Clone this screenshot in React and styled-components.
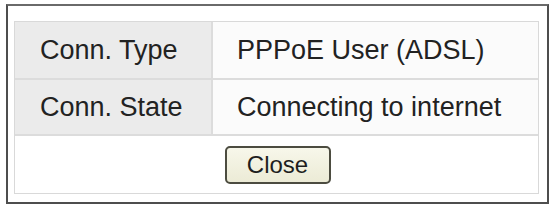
import React from "react";
import styled, { createGlobalStyle } from "styled-components";

const GlobalStyle = createGlobalStyle`
  body {
    margin: 0;
    background: #ffffff;
    font-family: "Liberation Sans", Arial, sans-serif;
  }
`

const Panel = styled.div`
  box-sizing: border-box;
  width: 543px;
  height: 200px;
  margin: 4px 0 0 6px;
  padding: 15px 8px 8px 6px;
  border: 2px solid #4e4e4e;
  border-top-color: #6a6a6a;
  background: #ffffff;
`

const InfoTable = styled.div`
  display: grid;
  grid-template-columns: 198px 1fr;
  grid-template-rows: 58px 56px 1fr;
  height: 100%;
  box-sizing: border-box;
  border: 1px solid #d9d9d9;
`

const Cell = styled.div`
  display: flex;
  align-items: center;
  padding-left: ${p => (p.$label ? "25px" : "24px")};
  font-size: 27px;
  color: #222;
  background: ${p => (p.$label ? "#ebebeb" : "#fbfbfb")};
  border-bottom: 2px solid #dcdcdc;
  border-right: ${p => (p.$label ? "2px solid #dcdcdc" : "none")};
  white-space: nowrap;
`

const Footer = styled.div`
  grid-column: 1 / span 2;
  display: flex;
  align-items: center;
  justify-content: center;
  padding-left: 2px;
  background: #ffffff;
`

const CloseButton = styled.button`
  box-sizing: border-box;
  width: 106px;
  height: 38px;
  border: 2px solid #4c4c40;
  border-radius: 5px;
  background: linear-gradient(#f7f7ea, #ecebd6);
  font-family: "Liberation Sans", Arial, sans-serif;
  font-size: 24px;
  color: #1e1e1e;
  padding: 0;
  cursor: pointer;
`

const rows = [
  ["Conn. Type", "PPPoE User (ADSL)"],
  ["Conn. State", "Connecting to internet"],
]

const App = () => {
  return (
    <>
      <GlobalStyle />
      <Panel>
        <InfoTable>
          {rows.map(([label, value]) => (
            <React.Fragment key={label}>
              <Cell $label>{label}</Cell>
              <Cell>{value}</Cell>
            </React.Fragment>
          ))}
          <Footer>
            <CloseButton>Close</CloseButton>
          </Footer>
        </InfoTable>
      </Panel>
    </>
  )
}

export default App;
